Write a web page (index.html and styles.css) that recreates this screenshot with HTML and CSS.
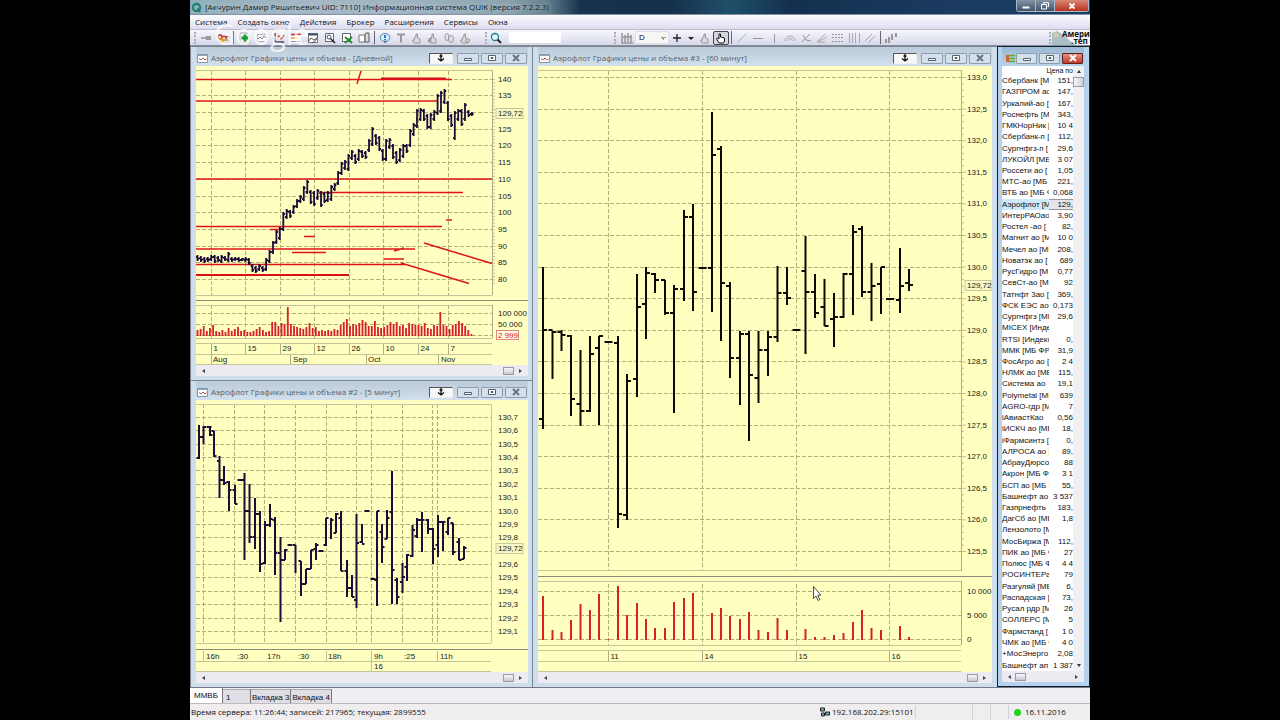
FILE: index.html
```html
<!DOCTYPE html>
<html lang="ru">
<head>
<meta charset="utf-8">
<title>Информационная система QUIK</title>
<link rel="stylesheet" href="styles.css">
</head>
<body>
<div class="app">
  <header class="titlebar">
    <svg class="logo" viewBox="0 0 12 12"><circle cx="6" cy="6" r="4" fill="none" stroke="#1b7f72" stroke-width="2.4"/><path d="M7 7l3 4" stroke="#1b7f72" stroke-width="2"/></svg>
    <h1>[Акчурин Дамир Ряшитьевич UID: 7110] Информационная система QUIK (версия 7.2.2.3)</h1>
    <div class="sys">
      <button aria-label="Свернуть"><svg viewBox="0 0 10 8"><path d="M1.500 4.500h7v2h-7z" fill="#fff"/></svg></button>
      <button aria-label="Развернуть"><svg viewBox="0 0 10 8"><path d="M3.500 2V.7h5v4H7.300M1.500 2.500h5v4.500h-5z" fill="none" stroke="#fff"/></svg></button>
      <button class="x" aria-label="Закрыть"><svg viewBox="0 0 10 8"><path d="M2.500 1.500l5 5m0-5l-5 5" stroke="#fff" stroke-width="1.800"/></svg></button>
    </div>
  </header>
  <nav class="menu">
    <a href="#">Система</a><a href="#">Создать окно</a><a href="#">Действия</a><a href="#">Брокер</a><a href="#">Расширения</a><a href="#">Сервисы</a><a href="#">Окна</a>
  </nav>
  <div class="toolbar">
    <i class="grip"></i>
    <div class="tools">
    <button aria-label="Соединение"><svg viewBox="0 0 12 12"><path d="M1 6h6" stroke="#999" stroke-width="1.500"/><path d="M6 4h5v4H6z" fill="#999"/></svg></button>
    <button aria-label="Ключи"><svg viewBox="0 0 12 12"><circle cx="3" cy="5" r="2" fill="none" stroke="#b23" stroke-width="1.300"/><path d="M5 4.500h6M9 5v2" stroke="#c33" stroke-width="1.500"/><circle cx="4" cy="8.500" r="1.800" fill="none" stroke="#c90" stroke-width="1.300"/><path d="M6 8h5" stroke="#c90" stroke-width="1.500"/></svg></button>
    <i class="sep"></i>
    <button aria-label="Создать"><svg viewBox="0 0 12 12"><path d="M1 1h7l3 3v7H1z" fill="#fff" stroke="#9ab"/><path d="M6 2.500v7M2.500 6h7" stroke="#1a9a2c" stroke-width="3"/></svg></button>
    <button aria-label="Таблица"><svg viewBox="0 0 12 12"><path d="M1.500 2.500h9v7h-9z" fill="#fff" stroke="#99a" stroke-dasharray="2 1"/><path d="M2 7l2-2 2 2 2-3 2 2" fill="none" stroke="#778"/></svg></button>
    <button aria-label="График"><svg viewBox="0 0 12 12"><path d="M2 1v9h9" fill="none" stroke="#446" stroke-width="1.500"/><path d="M4 7l2-3 2 3 3-4" fill="none" stroke="#c33" stroke-width="1.300"/></svg></button>
    <button aria-label="Стакан"><svg viewBox="0 0 12 12"><path d="M1 1h10v10H1z" fill="#fff"/><path d="M1 2.500h10" stroke="#c44" stroke-width="2"/><path d="M1 6h6" stroke="#db3" stroke-width="2"/><path d="M1 9.500h9" stroke="#88a"/></svg></button>
    <button aria-label="Окна"><svg viewBox="0 0 12 12"><path d="M1.500 1.500h9v9h-9z" fill="#fff" stroke="#777"/><path d="M1 2.500h10" stroke="#357" stroke-width="2"/><path d="M1 10l3-4 3 2 4-3M5 11l5-4" fill="none" stroke="#555"/></svg></button>
    <button aria-label="Поиск окна"><svg viewBox="0 0 12 12"><path d="M1.500 1.500h8v8h-8z" fill="#fff" stroke="#667"/><circle cx="5" cy="5" r="2" fill="none" stroke="#456"/><path d="M6.500 6.500L11 11" stroke="#222" stroke-width="1.500"/></svg></button>
    <button aria-label="Экспорт"><svg viewBox="0 0 12 12"><path d="M1.500 1.500h8v8h-8z" fill="#fff" stroke="#667"/><path d="M4 5l7 6M11 5l-7 6" stroke="#28902c" stroke-width="2"/></svg></button>
    <button aria-label="Копия"><svg viewBox="0 0 12 12"><path d="M1 3h6v7H1z" fill="#fff" stroke="#777"/><path d="M7 3l1-2h3v9H7z" fill="#ddd" stroke="#555"/></svg></button>
    </div>
    <i class="sep"></i>
    <button aria-label="Сообщение"><svg viewBox="0 0 12 12"><ellipse cx="6" cy="5.500" rx="4.800" ry="4" fill="#d8edff" stroke="#58a"/><path d="M5 9l1 2.500L8 9" fill="#368"/><path d="M6 3v3M6 7v1.200" stroke="#05a" stroke-width="1.500"/></svg></button>
    <button aria-label="Текст"><svg viewBox="0 0 12 12"><path d="M2 2.500h8M6 2.500v8" stroke="#999" stroke-width="2"/></svg></button>
    <button aria-label="Заявка"><svg viewBox="0 0 12 12"><use href="#hand"/></svg></button>
    <button aria-label="Снять заявку"><svg viewBox="0 0 12 12"><use href="#hand"/><path d="M1 6l4 4m0-4l-4 4" stroke="#888"/></svg></button>
    <button aria-label="Стоп-заявка"><svg viewBox="0 0 12 12"><g fill="none" stroke="#999"><ellipse cx="4" cy="5" rx="2" ry="3.500"/><ellipse cx="8" cy="7" rx="2.500" ry="3.500"/></g></svg></button>
    <button aria-label="Снять стоп"><svg viewBox="0 0 12 12"><use href="#hand"/><circle cx="8.500" cy="8.500" r="2" fill="#ccc" stroke="#999"/></svg></button>
    <i class="grip wide"></i>
    <button aria-label="Найти"><svg viewBox="0 0 12 12"><circle cx="5" cy="5" r="3.500" fill="#e4f8ff" stroke="#267a90" stroke-width="1.300"/><path d="M7.500 7.500L11 11" stroke="#222" stroke-width="2"/></svg></button>
    <input class="find" type="text" aria-label="Поиск">
    <i class="grip chart-grip"></i>
    <button aria-label="Вид графика"><svg viewBox="0 0 12 12"><path d="M1 1v10H12M4 3v8M7 1v9M10 3v8M2 5h9" fill="none" stroke="#999" stroke-width="1.500"/></svg></button>
    <select aria-label="Интервал"><option>D</option></select>
    <button aria-label="Добавить"><svg viewBox="0 0 12 12"><path d="M6 2v8M2 6h8" stroke="#222" stroke-width="1.300"/></svg></button>
    <button class="thin" aria-label="Меню"><svg viewBox="0 0 12 12"><path d="M3 5h6l-3 3z" fill="#222"/></svg></button>
    <button aria-label="Рука"><svg viewBox="0 0 12 12"><use href="#hand"/></svg></button>
    <button class="on" aria-label="Сдвиг"><svg viewBox="0 0 12 12"><path d="M4 11L1.500 7l1-1L4 7V2h1.500v3l4 1v3l-1 2z" fill="#fff" stroke="#111"/></svg></button>
    <i class="sep"></i>
    <button aria-label="Линия"><svg viewBox="0 0 12 12"><path d="M2 10l8-8" stroke="#aaa"/></svg></button>
    <button aria-label="Горизонталь"><svg viewBox="0 0 12 12"><path d="M1 6.500h10" stroke="#999"/></svg></button>
    <button aria-label="Вертикаль"><svg viewBox="0 0 12 12"><path d="M6.500 2v9" stroke="#999"/></svg></button>
    <button aria-label="Дуги"><svg viewBox="0 0 12 12"><g fill="none" stroke="#aaa"><path d="M1 9a5 5 0 0 1 10 0"/><path d="M3.500 9a2.500 2.500 0 0 1 5 0"/></g></svg></button>
    <button aria-label="Веер"><svg viewBox="0 0 12 12"><path d="M2 10l8-8M3 3l3 5 5 1" fill="none" stroke="#999"/></svg></button>
    <button aria-label="Лучи"><svg viewBox="0 0 12 12"><path d="M1 10l8-8M1 10l10-5M1 10h8" stroke="#aaa"/></svg></button>
    <button aria-label="Уровни"><svg viewBox="0 0 12 12"><path d="M0 2.500h12M0 5.500h12M0 9.500h12" stroke="#999" stroke-dasharray="2 1"/></svg></button>
    <button aria-label="Периоды"><svg viewBox="0 0 12 12"><path d="M1.500 1v10M4.500 1v10M7.500 1v10M11.500 1v10" stroke="#aaa"/></svg></button>
    <button aria-label="Канал"><svg viewBox="0 0 12 12"><path d="M1 9l7-7M4 11l7-7" stroke="#aaa"/></svg></button>
    <i class="sep"></i>
    <button aria-label="Свечи"><svg viewBox="0 0 12 12"><path d="M1 7v4M4 5v6M7 2v6M11 1v4" stroke="#999" stroke-width="2"/></svg></button>
    <i class="grip last"></i>
    <div class="ad"><svg viewBox="0 0 36 15" preserveAspectRatio="xMinYMid slice"><path d="M0 3l5-2 7 4 6 6 6 4H0z" fill="#a9bfc6"/><circle cx="4" cy="5" r="2.500" fill="#d8c9a0"/></svg><span>Америк<br>&nbsp;.теп</span></div>
  </div>

  <main class="desk">
    <div class="left">
      <section class="win">
        <header class="cap"><svg class="ic" viewBox="0 0 11 9"><use href="#chart"/></svg><h2>Аэрофлот Графики цены и объема - [Дневной]</h2>
          <div class="btns"></div></header>
        <svg class="plot" id="daily" viewBox="196 66 332 299" preserveAspectRatio="xMinYMin meet"></svg>
        <div class="hscroll"><i></i></div>
      </section>
      <section class="win">
        <header class="cap"><svg class="ic" viewBox="0 0 11 9"><use href="#chart"/></svg><h2>Аэрофлот Графики цены и объема #2 - [5 минут]</h2>
          <div class="btns"></div></header>
        <svg class="plot" id="five" viewBox="196 400 332 272" preserveAspectRatio="xMinYMin meet"></svg>
        <div class="hscroll"><i></i></div>
      </section>
    </div>
    <section class="win mid">
      <header class="cap"><svg class="ic" viewBox="0 0 11 9"><use href="#chart"/></svg><h2>Аэрофлот Графики цены и объема #3 - [60 минут]</h2>
        <div class="btns"></div></header>
      <svg class="plot" id="hour" viewBox="538 66 454 606" preserveAspectRatio="xMinYMin meet"></svg>
      <div class="hscroll"><i></i></div>
    </section>
    <section class="win quotes">
      <header class="cap"><svg class="ic" viewBox="0 0 11 9"><path d="M1 1h3v7H1z" fill="#c63"/><path d="M4 1.500h6M4 4.500h6M4 7.500h6" stroke="#6a2" stroke-width="1.500"/></svg>
        <div class="btns"></div></header>
      <div class="body">
        <div class="sheet"><table>
          <colgroup><col class="name"><col></colgroup>
          <thead><tr><th colspan="2">Цена по</th></tr></thead>
          <tbody id="rows"></tbody>
        </table></div>
        <div class="vscroll"><b class="up"></b><i></i><b class="down"></b></div>
      </div>
      <div class="hscroll start"><i></i></div>
    </section>
  </main>

  <div class="tabs" role="tablist">
    <button role="tab" class="cur">ММВБ</button><button role="tab" class="one">1</button><button role="tab">Вкладка 3</button><button role="tab">Вкладка 4</button>
  </div>
  <footer class="status">
    <span class="msg">Время сервера: 11:26:44; записей: 217965; текущая: 2899555</span>
    <span class="ip"><svg viewBox="0 0 11 10"><path d="M1 1h4v3H1zM6 5h4v3H6zM2 6h3v3H2z" fill="#6ab" stroke="#222"/></svg>192.168.202.29:15101</span>
    <span class="c1"></span><span class="c2"></span><span class="c2"></span>
    <span class="date"><i></i>16.11.2016</span>
  </footer>
  <div class="mark">Google</div>
</div>

<svg class="defs" aria-hidden="true">
  <defs>
    <g id="hand"><path d="M3 11L1.500 8h2V5.500L5 5V2h1.500v4L9 7v4z" fill="#ddd" stroke="#999"/></g>
    <g id="chart"><path d="M.5.500h10v8H.500z" fill="#fff" stroke="#8497aa"/><path d="M1 1.500h9" stroke="#8fa8c0"/><path d="M2 4.500l2 1.500 2-2 2 2 1.500-1" fill="none" stroke="#a55"/></g>
  </defs>
</svg>
<script src="charts.js"></script>
</body>
</html>
```

FILE: styles.css
```css
* { box-sizing: border-box; }
body { margin: 0; background: #000; font: 8px/10px "Liberation Sans", Arial, sans-serif; color: #111; }
button, input, select { font: inherit; color: inherit; padding: 0; margin: 0; border: 0; background: none; }
h1, h2 { margin: 0; font: inherit; white-space: nowrap; }
a { color: inherit; text-decoration: none; }
.defs { display: none; }
.app { position: relative; display: flex; flex-direction: column; height: 100vh; min-height: 600px; margin: 0 190px; background: #f0eef2; overflow: hidden; }

.titlebar { display: flex; flex: none; height: 15px; padding-left: 1px; align-items: center; background: linear-gradient(90deg, #8fb0ba 0, #a4b6c4 120px, #9fb2c0 220px, #8aa2ae 320px, #5f7f8c 358px, #18324c 390px, #16304c 480px, #1f5068 540px, #14304e 600px, #1a3a60 760px, #1d3f66 100%); border-bottom: 1px solid #7f91a6; }
.titlebar .logo { width: 11px; height: 11px; margin-right: 3px; }
.titlebar h1 { flex: 1; font-family: "Open Sans", sans-serif; color: #101820; text-shadow: 0 0 4px #cfdde4; }
.sys { display: flex; align-self: flex-start; height: 12px; margin-right: 1px; border: 1px solid #a9b8c8; border-top: 0; border-radius: 0 0 3px 3px; overflow: hidden; }
.sys button { display: flex; width: 19px; align-items: center; justify-content: center; background: linear-gradient(#8595a8, #3e5268); border-right: 1px solid #a9b8c8; }
.sys .x { width: 33px; border: 0; background: linear-gradient(#d88878, #b8301c); }
.sys svg { width: 10px; height: 8px; }

.menu { display: flex; flex: none; gap: 10px; height: 14px; padding: 0 5px; align-items: center; background: linear-gradient(#fcfcff, #dcdcf0); font-family: "Open Sans", sans-serif; }
.toolbar { display: flex; flex: none; height: 17px; align-items: center; background: linear-gradient(#f6f6fc, #d6d8ea); border-top: 1px solid #bcbcc8; border-bottom: 1px solid #888c98; padding-left: 4px; }
.toolbar button { display: flex; flex: none; width: 16px; height: 14px; align-items: center; justify-content: center; }
.tools { display: flex; align-items: center; }
.toolbar .tools button { width: 17px; }
.toolbar svg { width: 12px; height: 12px; }
.toolbar .thin { width: 12px; }
.toolbar .on { background: #d4d6e0; border: 1px solid #445; border-radius: 2px; }
.grip { width: 3px; height: 12px; border-left: 2px dotted #aab; }
.grip.wide { margin-left: 12px; }
.sep { width: 1px; height: 13px; margin: 0 2px; background: #667; }
.find { width: 52px; height: 11px; margin-left: 5px; background: #fff; }
.chart-grip { margin-left: 53px; margin-right: 2px; }
.toolbar select { width: 34px; height: 13px; padding-left: 3px; appearance: none; border: 1px solid #dde; background: linear-gradient(45deg, transparent 50%, #999 50%) 24px 5px / 3px 3px no-repeat, linear-gradient(-45deg, transparent 50%, #999 50%) 27px 5px / 3px 3px no-repeat, #f6f6f2; }
.last { margin-left: auto; }
.ad { position: relative; width: 38px; height: 15px; overflow: hidden; background: #f4f4f8; font: bold 8px/7px "Open Sans", sans-serif; color: #111; }
.ad svg { width: 36px; height: 15px; }
.ad span { position: absolute; left: 10px; top: 0; white-space: nowrap; text-align: center; }

.desk { display: grid; grid-template-columns: 342fr 465fr 93fr; flex: 1; min-height: 0; }
.left { display: grid; grid-template-rows: 334fr 307fr; min-height: 0; min-width: 0; }
.win { display: flex; flex-direction: column; min-width: 0; min-height: 0; padding: 0 4px 4px 5px; background: #cfdeed; border: 1px solid #7a8490; border-right: 0; border-bottom: 0; }
.mid { padding-right: 5px; }
.cap { display: flex; flex: none; height: 19px; padding-top: 3px; align-items: center; background: linear-gradient(#bccbda, #d2dfec); }
.cap .ic { flex: none; width: 11px; height: 9px; margin: 0 3px 0 1px; }
.cap h2 { font-family: "Open Sans", sans-serif; color: #526170; }
.btns { display: flex; gap: 2px; margin-left: auto; padding-right: 1px; }
.btns button { display: flex; width: 22px; height: 11px; align-items: center; justify-content: center; background: #d4e0ec; border: 1px solid #8e9cac; border-radius: 1px; }
.btns svg { width: 10px; height: 8px; }
.btns .pin { width: 24px; margin-right: 2px; background: #f8f8f8; border-color: #555 #eee #eee #555; }
.plot { display: block; flex: 1; width: 100%; min-height: 0; background: #ffffc0; font-size: 8px; }
.hscroll { position: relative; display: flex; flex: none; height: 11px; padding: 0 14px 0 6px; align-items: center; background: #eeeaf2; }
.hscroll::before { content: ""; border: 2px solid transparent; border-right: 3px solid #445; border-left: 0; }
.hscroll::after { content: ""; position: absolute; right: 6px; border: 2px solid transparent; border-left: 3px solid #445; border-right: 0; }
.hscroll i { width: 11px; height: 8px; margin-left: auto; background: linear-gradient(#f8f8fa, #c8c8d2); border: 1px solid #9a9aa6; }
.hscroll.start i { margin: 0 auto 0 4px; }

.quotes { background: #b4d2ee; border: 1px solid #10222e; padding: 0 5px 4px 4px; }
.quotes .cap { background: linear-gradient(#9cb8d2, #b8d2ec); }
.quotes .cap .ic { margin: 0 0 0 3px; }
.quotes .btns button { width: 21px; }
.quotes .btns button.x { background: linear-gradient(#e09080, #c0392b); border-color: #6a2018; }
.body { display: flex; flex: 1; min-height: 0; background: #fff; }
.sheet { flex: 1; min-width: 0; overflow: hidden; }
table { width: 100%; height: 100%; border-collapse: collapse; table-layout: fixed; }
col.name { width: 66%; }
th, td { padding: 0; height: 11px; line-height: 9px; white-space: nowrap; overflow: hidden; }
th { height: 9px; font-size: 7px; font-weight: normal; text-align: right; }
td:last-child { text-align: right; }
tr.sel td { background: #cde8f8; }
tr.sel td:last-child { background: #e4e4ea; box-shadow: inset 0 1px #999, inset 0 -1px #999; }
.vscroll { display: flex; flex-direction: column; width: 11px; align-items: center; padding: 4px 0; background: #f0eff2; }
.vscroll i { width: 11px; height: 10px; margin-top: 4px; background: linear-gradient(90deg, #f8f8fa, #ccccd4); border: 1px solid #9a9aa6; }
.vscroll b { border: 2px solid transparent; }
.vscroll .up { border-bottom: 3px solid #333; border-top: 0; }
.vscroll .down { margin-top: auto; border-top: 3px solid #333; border-bottom: 0; }

.tabs { display: flex; flex: none; height: 17px; background: #f0eef2; border-top: 1px solid #778; border-bottom: 1px solid #bbb; }
.tabs button { padding: 2px 1px 0; margin-top: 1px; background: #dedee4; border-right: 1px solid #777; border-top: 1px solid #aaa; }
.tabs .cur { padding: 0 4px; margin-top: 0; background: #fff; border-top: 0; }
.tabs .one { width: 28px; text-align: left; padding-left: 3px; }
.status { display: flex; flex: none; height: 16px; align-items: center; background: #f0edef; font-family: "Open Sans", sans-serif; }
.status span { display: flex; height: 14px; align-items: center; }
.status .msg { flex: 1; padding-left: 1px; white-space: nowrap; }
.status .ip { width: 97px; gap: 1px; border-right: 1px solid #d4d0d4; }
.status .ip svg { width: 12px; height: 10px; }
.status .c1 { width: 57px; border-right: 1px solid #d4d0d4; }
.status .c2 { width: 18px; border-right: 1px solid #d4d0d4; }
.status .date { width: 81px; gap: 4px; padding-left: 5px; }
.status .date i { width: 7px; height: 7px; border-radius: 50%; background: #1fd41f; }
.mark { position: absolute; left: 24px; top: 16px; font: 29px/36px "Open Sans", sans-serif; color: rgba(255, 255, 255, .75); pointer-events: none; }
```

FILE: charts.js
```js
const NS = 'http://www.w3.org/2000/svg';
const INK = '#1c0d38';
function add(svg, tag, attrs, text) {
  const e = document.createElementNS(NS, tag);
  for (const k in attrs) e.setAttribute(k, attrs[k]);
  if (text !== undefined) e.textContent = text;
  svg.appendChild(e);
  return e;
}
const line = (s, d, color, w, dash) =>
  add(s, 'path', Object.assign({ d, fill: 'none', stroke: color, 'stroke-width': w }, dash ? { 'stroke-dasharray': dash } : {}));
const label = (s, x, y, t, color) => add(s, 'text', { x, y: y + 2.5, fill: color || '#222' }, t);

function grid(s, xs, ys, x0, x1, y0, y1) {
  line(s, xs.map(x => `M${x} ${y0}V${y1}`).join('') + ys.map(y => `M${x0} ${y}H${x1}`).join(''), '#b0b078', 1, '4 2');
}
function frame(s, x0, x1, rows, full) {
  line(s, rows.map(y => `M${x0} ${y}H${x1}`).join(''), '#c4c49c', 1);
  line(s, full, '#8c8c80', 1);
}
/* bar: [x, high, low, open, close]; dash: [x, y] */
function bars(s, list, color, w, tick) {
  let d = '', t = '';
  for (const [x, h, l, o, c] of list) {
    if (l === undefined) { t += `M${x - tick} ${h}h${2 * tick}`; continue; }
    d += `M${x} ${h}V${l}`;
    if (o) t += `M${x - tick} ${o}h${tick}`;
    if (c) t += `M${x} ${c}h${tick}`;
  }
  line(s, d, color, w);
  line(s, t, color, Math.min(w, 2));
}
function priceTag(s, x, y, w) {
  add(s, 'rect', { x: x - 2, y: y - 5, width: w, height: 10, fill: '#f8f8c4', stroke: '#c8c89c' });
  label(s, x, y, '129,72');
}

/* Daily chart */
(() => {
  const s = document.getElementById('daily');
  const xs = [211.5, 245.5, 280.5, 314.5, 349.5, 383.5, 418.5, 448.5];
  const ys = [...Array(13)].map((_, i) => Math.round(78.6 + i * 16.7) + .5);
  grid(s, xs, ys, 196, 492, 71, 295);
  grid(s, xs, [313.5, 324.5, 335.5], 196, 492, 305, 338);
  frame(s, 196, 492, [70.5, 295.5, 305.5, 338.5, 343.5, 354.5, 364.5], 'M196 300.5H528');
  line(s, 'M492.500 70V295M492.500 305V338', '#b0b088', 1);
  line(s, [...Array(62)].map((_, i) => `M493 ${(79.5 + i * 3.34).toFixed(1)}h2`).join(''), '#c0c098', 1);
  line(s, 'M196 79.500H452M196 101H438M196 179H492M320 192.500H463M196 226.500H442M446 220H452M196 249H415M292 252.500H326M304 236.500H315M270 229.500H280M384 259H404M196 264.500H405M401 263L469 283.500M424 243L492 263.500M394 251L404 248M357 84L361 71', '#e0141c', 1.5);
  line(s, 'M381 78.500H446M196 275H349', '#d8101c', 2);
  const hl = '255 261 256 262 257 263 257 262 255 261 255 263 256 262 255 263 256 261 252 262 257 262 257 261 257 262 258 261 257 262 258 265 264 272 266 273 264 271 266 272 258 271 250 263 241 254 230 244 227 240 212 231 209 219 210 218 205 214 199 208 195 203 186 201 180 194 190 204 191 206 189 200 191 207 192 203 191 202 185 201 183 191 171 185 162 175 160 170 154 171 150 160 154 164 149 161 150 158 151 159 139 152 127 146 134 145 136 151 149 161 139 161 138 149 144 159 151 164 148 162 144 158 144 153 129 147 123 136 109 128 108 121 109 121 114 129 113 129 110 121 94 115 91 113 89 104 101 121 114 127 111 140 109 121 109 126 103 121 110 117 112 116'.split(' ').map(Number);
  const vol = [6, 7, 10, 5, 8, 11, 5, 4, 6, 4, 8, 5, 7, 9, 5, 6, 4, 4, 5, 7, 9, 6, 4, 5, 14, 14, 10, 13, 12, 29, 12, 10, 9, 8, 7, 9, 13, 8, 9, 5, 6, 5, 6, 5, 7, 6, 11, 14, 17, 10, 12, 11, 13, 16, 14, 10, 10, 15, 9, 8, 9, 11, 14, 12, 14, 10, 11, 8, 13, 12, 11, 11, 10, 13, 8, 7, 11, 10, 24, 11, 10, 7, 11, 12, 15, 13, 10, 6, 2];
  const list = [];
  for (let i = 0; i < hl.length / 2; i++) {
    const x = +(197.5 + i * 3.43).toFixed(1), h = hl[2 * i], l = hl[2 * i + 1];
    const rise = i > 0 && h < hl[2 * i - 2];
    list.push([x, h, l, rise ? l - 2 : h + 2, rise ? h + 2 : l - 2]);
  }
  bars(s, list, INK, 1.8, 1.7);
  const n = vol.length, step = 277 / n;
  line(s, vol.map((v, i) => `M${(197.5 + i * step).toFixed(1)} 336v-${v}`).join(''), '#d8202c', 1.8);
  ['140', '135', '', '125', '120', '115', '110', '105', '100', '95', '90', '85', '80'].forEach((t, i) => t && label(s, 498, ys[i], t));
  priceTag(s, 498, 113.5, 27);
  label(s, 498, 313.5, '100 000'); label(s, 498, 324.5, '50 000');
  add(s, 'rect', { x: 496.5, y: 330.5, width: 22, height: 9, fill: '#fffbe0', stroke: '#d88' });
  label(s, 498, 335, '2 999', '#d22');
  line(s, xs.map(x => `M${x} 344v10`).join('') + 'M211.500 355v9M290.500 355v9M366.500 355v9M438.500 355v9', '#b0b088', 1);
  ['1', '15', '29', '12', '26', '10', '24', '7'].forEach((t, i) => label(s, xs[i] + 2, 348.5, t));
  [[213, 'Aug'], [293, 'Sep'], [368, 'Oct'], [441, 'Nov']].forEach(([x, t]) => label(s, x, 359.5, t));
})();

/* Five-minute chart */
(() => {
  const s = document.getElementById('five');
  const xs = [203.5, 234.5, 264.5, 295.5, 326.5, 356.5, 371.5, 402.5, 432.5, 437.5];
  const ys = [...Array(17)].map((_, i) => Math.round(417 + i * 13.37) + .5);
  grid(s, xs, ys, 196, 491, 404, 643);
  frame(s, 196, 491, [404.5, 643.5, 661.5, 671.5], 'M196 649.500H528');
  line(s, 'M491.500 404V643', '#c8c8a0', 1);
  bars(s, [[199, 425, 459, 458, 437], [203.5, 426, 444, 437, 427], [209, 427], [210, 426, 436, 0, 435], [214, 431, 457, 431, 456], [219.5, 456, 498, 461, 480], [224, 466, 485, 480, 483], [229, 481, 511, 482, 490], [235, 485, 504, 490, 504], [240, 480], [244.5, 473, 560, 480, 511], [249.5, 484, 543, 511, 537], [255, 498, 549, 537, 514], [260, 511, 572, 514, 564], [265, 521, 564, 563, 525], [270, 504, 527, 525, 519], [275, 517, 575, 520, 553], [280.5, 537, 622, 553, 560], [285, 549, 560, 560, 550], [290, 545], [295.5, 545, 573, 545, 0], [301, 561, 596, 561, 584], [306, 569, 584, 584, 569], [311, 550, 569, 569, 550], [316, 543, 560, 549, 545], [321, 551], [326, 518, 546, 545, 518], [331, 518, 539, 0, 520], [336, 513, 533, 533, 514], [341, 511, 571, 518, 571], [347, 560, 597, 571, 588], [352, 575, 597, 588, 597], [356.5, 514, 608, 600, 543], [362, 524, 543, 542, 544], [367, 511], [373, 579], [377, 511, 606, 580, 511], [382, 524, 563, 532, 547], [387, 510, 539, 539, 518], [392, 471, 604, 512, 570], [397, 578, 604, 580, 597], [402.5, 563, 593, 582, 577], [407, 554, 581, 567, 555], [412.5, 525, 557, 556, 530], [417, 518, 538, 536, 520], [422, 512, 552, 520, 520], [428, 519, 534, 520, 529], [433, 528, 564, 529, 549], [438, 515, 557, 545, 522], [443, 521, 551, 522, 522], [448, 518, 535, 532, 518], [453, 523, 555, 523, 552], [459, 538, 560, 542, 560], [464, 546, 559, 559, 548]], INK, 2, 2.5);
  ys.forEach((y, i) => { if (i !== 10) label(s, 498, y, (130.7 - i / 10).toFixed(1).replace('.', ',')); });
  priceTag(s, 498, 548.5, 27);
  line(s, 'M203.500 651v10M371.500 651v20M326.500 651v10M437.500 651v10', '#c0c098', 1);
  [[206, '16h'], [237, ':30'], [267, '17h'], [298, ':30'], [328, '18h'], [374, '9h'], [404, ':25'], [440, '11h']].forEach(([x, t]) => label(s, x, 656, t));
  label(s, 374, 666.5, '16');
})();

/* Hourly chart */
(() => {
  const s = document.getElementById('hour');
  const xs = [608.5, 702.5, 796.5, 889.5];
  const ys = [...Array(16)].map((_, i) => Math.round(77 + i * 31.6) + .5);
  grid(s, xs, ys, 538, 961, 71, 570);
  grid(s, xs, [591.5, 615.5, 639.5], 538, 961, 584, 645);
  frame(s, 538, 961, [70.5, 570.5, 581.5, 645.5, 650.5, 661.5, 671.5], 'M538 576.500H992');
  line(s, 'M961.500 70V571M961.500 581V645', '#b0b088', 1);
  line(s, [...Array(76)].map((_, i) => `M962 ${(77.5 + i * 6.32).toFixed(1)}h${i % 5 ? 2 : 4}`).join(''), '#c0c098', 1);
  const hour = [[543, 267, 429, 419, 330], [552.5, 331, 379, 330, 332], [561.5, 330, 351, 332, 335], [571, 335, 416, 336, 399], [580.5, 350, 426, 404, 411], [590, 336, 412, 411, 354], [599, 336, 425, 348, 336], [608.5, 342], [618, 336, 528, 343, 514], [627, 374, 520, 515, 381], [637, 274, 397, 379, 307], [646, 267, 339, 304, 273], [655, 273, 293, 274, 280], [665, 280, 315, 280, 313], [674, 285, 413, 313, 289], [684, 210, 301, 289, 217], [693, 204, 311, 217, 292], [702.5, 268], [712, 112, 312, 268, 155], [721, 146, 341, 149, 283], [730, 282, 378, 286, 358], [740, 331, 405, 358, 334], [749, 331, 441, 334, 375], [758.5, 331, 403, 378, 350], [768, 331, 376, 350, 337], [777.5, 266, 342, 337, 293], [787, 267, 305, 293, 298], [796.5, 330], [805.5, 236, 354, 271, 292], [815, 274, 318, 292, 313], [824.5, 279, 326, 307, 326], [834, 293, 347, 319, 317], [843.5, 273, 318, 317, 274], [853, 225, 315, 274, 232], [862, 226, 297, 229, 292], [871.5, 263, 321, 292, 286], [881, 267, 314, 284, 267], [890, 299], [900, 248, 313, 300, 286], [909, 269, 291, 283, 285]];
  bars(s, hour, '#0a0a00', 2, 4);
  const tops = [596, 630, 632, 620, 604, 610, 594, 639, 586, 615, 603, 619, 628, 628, 602, 598, 593, 640, 613, 608, 616, 619, 612, 630, 632, 618, 630, 640, 629, 637, 637, 635, 633, 622, 610, 628, 630, 640, 626, 637];
  line(s, hour.map((b, i) => `M${b[0]} 640V${tops[i]}`).join(''), '#d8202c', 2);
  ys.forEach((y, i) => label(s, 967, y, (133 - i / 2).toFixed(1).replace('.', ',')));
  priceTag(s, 967, 285.5, 26);
  label(s, 967, 591, '10 000'); label(s, 967, 615.5, '5 000'); label(s, 967, 639.5, '0');
  line(s, xs.map(x => `M${x} 651v10`).join(''), '#b0b088', 1);
  ['11', '14', '15', '16'].forEach((t, i) => label(s, xs[i] + 2, 656, t));
  add(s, 'path', { d: 'M813.500 586.500v12l2.500-2.500 2 4.500 1.800-1-2-4.300h3z', fill: '#fff', stroke: '#222', 'stroke-width': .8 });
})();

/* Window caption buttons */
document.querySelectorAll('.btns').forEach(box => {
  const quotes = box.closest('.quotes');
  const fill = quotes ? '#fff' : '#6a7683';
  const b = (cls, name, art) => `<button class="${cls}" aria-label="${name}"><svg viewBox="0 0 10 8">${art}</svg></button>`;
  box.innerHTML = (quotes ? '' : b('pin', 'Закрепить', '<path d="M5 0v7M3.500 2h3M2 4.500l3 2.500 3-2.500" fill="none" stroke="#111" stroke-width="1.300"/>')) +
    b('', 'Свернуть', '<path d="M1.500 4.500h7v2h-7z" fill="#fff" stroke="#56616e"/>') +
    b('', 'Развернуть', '<path d="M1.500 1.500h7v5h-7zM4 3.500h2v1H4z" fill="#fff" stroke="#56616e"/>') +
    b('x', 'Закрыть', `<path d="M2 1l6 6m0-6L2 7" stroke="${fill}" stroke-width="2"/>`);
});

/* Quotes */
const quotes = `Сбербанк [М|151,
ГАЗПРОМ ао|147,
Уркалий-ао [|167,
Роснефть [М|343,
ГМКНорНик [|10 4
Сбербанк-п [|112,
Сургнфгз-п [|29,6
ЛУКОЙЛ [МБ|3 07
Россети ао [|1,05
МТС-ао [МБ Ф|221,
ВТБ ао [МБ Ф|0,068
Аэрофлот [М|129,
ИнтерРАОао|3,90
Ростел -ао [|82,
Магнит ао [М|10 0
Мечел ао [МБ|208,
Новатэк ао [|689
РусГидро [М|0,77
СевСт-ао [М|92
Татнфт 3ао [|369,
ФСК ЕЭС ао|0,173
Сургнфгз [МБ|29,6
MICEX [Инде|
RTSI [Индекс|0,
ММК [МБ ФР]|31,9
ФосАгро ао [|2 4
НЛМК ао [МБ|115,
Система ао|19,1
Polymetal [МБ|639
AGRO-гдр [М|7
iАвиастКао|0,56
iИСКЧ ао [МБ|18,
iФармсинтз [|0,
АЛРОСА ао [|89,
АбрауДюрсо|88
Акрон [МБ Ф|3 1
БСП ао [МБ Ф|55,
Башнефт ао|3 537
Газпрнефть|183,
ДагСб ао [МБ|1,8
Лензолото [М|
МосБиржа [М|112,
ПИК ао [МБ Ф|27
Полюс [МБ Ф|4 4
РОСИНТЕРао|79
Разгуляй [МБ|6,
Распадская [|73,
Русал рдр [М|26
СОЛЛЕРС [М|5
Фармстанд [|1 0
ЧМК ао [МБ Ф|4 0
+МосЭнерго|2,08
Башнефт ап|1 387`;
document.getElementById('rows').innerHTML = quotes.split('\n').map(r => {
  const [name, price] = r.split('|');
  return `<tr${name.startsWith('Аэро') ? ' class="sel"' : ''}><td>${name}</td><td>${price}</td></tr>`;
}).join('');
```
